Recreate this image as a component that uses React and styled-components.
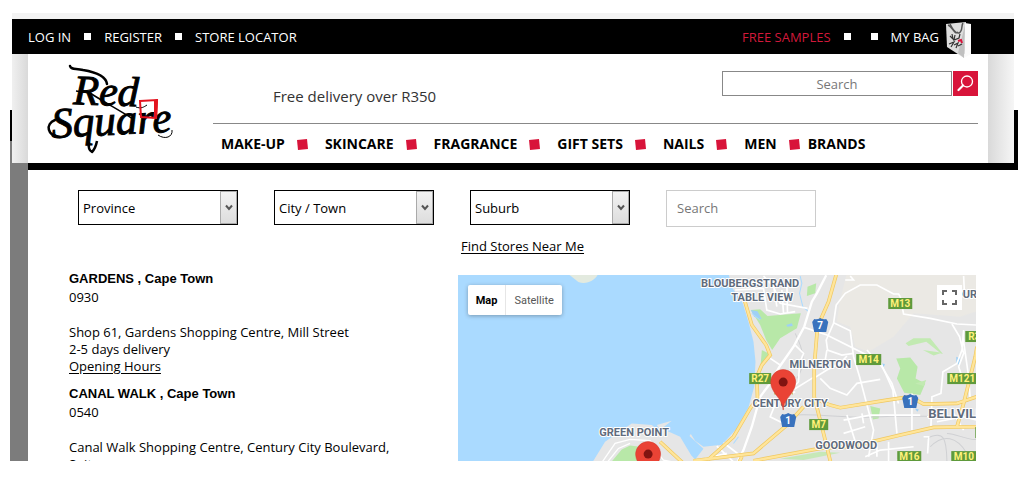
import styled, { createGlobalStyle, css } from 'styled-components';

const navItems = ['MAKE-UP', 'SKINCARE', 'FRAGRANCE', 'GIFT SETS', 'NAILS', 'MEN', 'BRANDS'];

const filters = [
  { id: 'province', label: 'Province' },
  { id: 'city', label: 'City / Town' },
  { id: 'suburb', label: 'Suburb' }
];

const stores = [
  {
    code: '0930',
    name: 'GARDENS , Cape Town',
    address: ['Shop 61, Gardens Shopping Centre, Mill Street'],
    delivery: '2-5 days delivery',
    hours: '#hours'
  },
  {
    code: '0540',
    name: 'CANAL WALK , Cape Town',
    address: ['Canal Walk Shopping Centre, Century City Boulevard,', 'Suite']
  }
];

const roadSigns = [
  { text: 'M13', x: 430, y: 23, w: 24 },
  { text: 'M14', x: 398, y: 79, w: 25 },
  { text: 'R27', x: 291, y: 98, w: 22 },
  { text: 'R3', x: 507, y: 56, w: 18 },
  { text: 'M121', x: 489, y: 98, w: 30 },
  { text: 'M7', x: 351, y: 144, w: 19 },
  { text: 'M16', x: 439, y: 176, w: 24 },
  { text: 'M10', x: 493, y: 176, w: 25 }
];

const shields = [
  { text: '7', x: 362, y: 50 },
  { text: '1', x: 330, y: 145 },
  { text: '1', x: 452, y: 126 }
];

const places = [
  { text: 'BLOUBERGSTRAND', x: 292, y: 12 },
  { text: 'TABLE VIEW', x: 304, y: 26 },
  { text: 'MILNERTON', x: 362, y: 93 },
  { text: 'CENTURY CITY', x: 332, y: 132 },
  { text: 'GOODWOOD', x: 388, y: 174 },
  { text: 'GREEN POINT', x: 176, y: 161 }
];

const Logo = () => (
  <LogoArt viewBox="0 0 140 100" role="img" aria-label="Red Square">
    <text x="33" y="46" fontSize="42" transform="rotate(2 33 46)">Red</text>
    <text x="12" y="80" fontSize="43" transform="rotate(-3 12 80)">Square</text>
    <path d="M30 8C31 12 36 10 43 12C55 14 66 18 67 26" fill="none" stroke="#000" strokeWidth="2.5" strokeLinecap="round" />
    <path d="M36 33L50 35C64 44 77 51 93 61" fill="none" stroke="#000" strokeWidth="1.5" />
    <path d="M15 62C5 66 7 78 20 79" fill="none" stroke="#000" strokeWidth="2.5" strokeLinecap="round" />
    <path d="M49 84C48 90 50 93 52 94C54 92 56 88 57 83" fill="none" stroke="#000" strokeWidth="2.5" strokeLinejoin="round" />
    <path d="M96 49C101 51 104 49 107 47" fill="none" stroke="#000" strokeWidth="1" />
    <path d="M100 43L117 42L116 60L101 59Z" fill="none" stroke="#e3131f" strokeWidth="2" />
    <path d="M114 42L118 41L117 61L114 59Z" fill="#e3131f" />
    <path d="M118 77C125 82 133 79 132 72" fill="none" stroke="#000" strokeWidth="1" />
  </LogoArt>
);

const BagIcon = () => (
  <BagArt viewBox="0 0 28 38" aria-hidden="true">
    <path d="M1 3L21 1L19 37L2 26Z" fill="#dedede" />
    <path d="M20 2L26 3L26 33L19 37Z" fill="#fafafa" />
    <path d="M20 4L19 37L13 32Z" fill="#c0c0c0" />
    <path d="M5 3C7 7 10 13 14 12C18 10 16 5 18 2M3 4C8 6 9 14 13 11" fill="none" stroke="#555" strokeWidth="1.5" />
    <path d="M5 15L8 18L7 13M10 14L9 19L14 17L15 13M4 23L9 21L6 26M9 24L13 22L11 27M13 25L17 23" fill="none" stroke="#333" strokeWidth="1.2" />
    <path d="M13 20L16 19L17 22" fill="none" stroke="#d8143a" strokeWidth="2" />
  </BagArt>
);

const Pin = ({ x, y }) => (
  <g transform={`translate(${x} ${y})`}>
    <path d="M0 40C-1 27-12 24-12.5 12A12.5 12.5 0 0 1 12.5 12C12 24 1 27 0 40Z" fill="#ea4335" stroke="#d33a2d" strokeWidth=".5" />
    <circle cy="12" r="4.5" fill="#811411" />
  </g>
);

const StoreMap = () => (
  <MapArt viewBox="0 0 518 186" preserveAspectRatio="xMaxYMin slice" role="img" aria-label="Store map">
    <rect width="518" height="186" fill="#aadaff" />
    <g transform="translate(222 -105) scale(.33333)">
      <path d="M145 310L155 352L188 400L206 460L220 515L226 575L222 650L205 712L170 775L125 824L70 830L45 812L32 792L28 798L70 836L45 868L15 836L0 850L30 890L900 890L900 310Z" fill="#e6e6e6" />
      <path d="M500 310L900 310L900 420L840 440L700 430L640 500L565 545L525 530L510 470L470 455L480 390Z" fill="#ebe9e4" />
      <path d="M-333 314L-247 314C-255 330-280 345-305 336Z" fill="#e3eadf" />
      <path d="M-265 880L-225 815L-190 790L-145 760L-85 765L-50 795L-70 765L-25 752L-55 775L0 800L30 850L45 890L-265 890Z" fill="#e6e6e6" />
      <path d="M-210 880L-175 838L-150 826L-120 830L-110 880Z" fill="#b8e8a8" />
      <path d="M212 420L240 418L262 438L362 430L350 475L300 505L276 540L258 510L240 465Z" fill="#b8e8a8" />
      <path d="M245 540L268 552L240 600ZM382 350L408 340L405 370L380 378ZM648 565L690 562L712 590L706 625L735 640L720 675L672 668L650 625L660 595ZM570 708L600 715L595 745L578 748Z" fill="#b8e8a8" />
      <path d="M676 520L700 505L750 505L788 552L782 550L738 515L685 528Z" fill="#c2eab2" />
      <path d="M728 540L785 548L760 556ZM705 640L738 630L730 648Z" fill="#c2eab2" />
      <path d="M300 866L420 845L480 848L370 870Z" fill="#c6e8b8" />
      <path d="M212 420L232 424L245 448L222 440ZM318 465L335 460L338 468L322 470ZM605 580L614 582L610 592ZM828 560L840 565L838 585L828 580ZM704 715L716 718L711 725Z" fill="#9fd0f5" />
      <path d="M360 318L365 340L358 370L368 410L385 425M215 430L240 450M160 820L175 800" fill="none" stroke="#aadaff" strokeWidth="3" />
      <path d="M345 735C430 730 520 750 640 738L890 740M740 805C790 780 800 800 800 885M800 790C830 790 855 810 888 808M345 490C370 540 380 580 350 625M750 830C790 790 830 800 860 850" fill="none" stroke="#cfd0d3" strokeWidth="3" />
      <g fill="none" stroke="#fff" strokeWidth="5">
        <path d="M438 316L410 370L395 395L372 470L340 530L298 590L270 640L240 680L215 770L190 840L170 880" strokeWidth="7" />
        <path d="M165 360L250 355L260 420L300 432L345 425M250 318L280 350L300 400L382 415M280 345L290 410M305 360L310 430M320 340L322 430" />
        <path d="M660 380L655 372L640 372L590 345L540 345L495 370L468 405L460 460L438 510L442 540L485 555L520 550" />
        <path d="M460 458L510 482L520 560L538 620L580 780L565 860M372 472L440 495L600 575L638 660L650 790M345 525L370 550L358 580L355 635L310 685" />
        <path d="M400 625L440 600L480 580L500 558M420 625L450 655L500 675L530 640L600 628M345 665L290 690L270 740L330 770M330 665L400 622" />
        <path d="M660 380L670 432L750 445L830 462L890 465M815 462L838 500L850 550L835 590L845 620M850 480L845 540L830 580L788 605L782 670L755 680L752 770M850 318L852 360L884 380M848 500L865 620L870 690" />
        <path d="M560 540L605 590L635 640L655 700M270 565L300 585M490 750L570 735L720 735M490 790L555 770M500 735L530 830M545 730L550 760M695 670L695 780M740 740L800 740M730 800L745 800L742 850M690 860L650 870M555 860L600 840L700 830M625 815L625 880M590 830L590 860" />
        <path d="M130 818L185 860M110 828L165 880M20 890L75 865L140 850M770 755L850 740L890 750M820 730L850 780" />
        <path d="M510 318L520 330L495 330M440 540L430 600" />
      </g>
      <g fill="none" stroke="#f0c860" strokeWidth="11">
        <path d="M468 314L445 395L412 470L402 590L402 680L430 790L452 880" />
        <path d="M190 380L215 465L258 525L270 555L245 585L230 620L232 685L210 715L160 800L85 868" />
        <path d="M40 872L220 850L320 765L370 710M220 872L420 835L520 828L660 795L760 772L890 770M415 690L450 705L480 713L620 690L690 680L730 702L830 700L890 680M830 770L850 700L885 560L890 530" />
        <path d="M-60 815L10 880M175 880L185 860" />
      </g>
      <g fill="none" stroke="#ffe59a" strokeWidth="7">
        <path d="M468 314L445 395L412 470L402 590L402 680L430 790L452 880" />
        <path d="M190 380L215 465L258 525L270 555L245 585L230 620L232 685L210 715L160 800L85 868" />
        <path d="M40 872L220 850L320 765L370 710M220 872L420 835L520 828L660 795L760 772L890 770M415 690L450 705L480 713L620 690L690 680L730 702L830 700L890 680M830 770L850 700L885 560L890 530" />
        <path d="M-60 815L10 880M175 880L185 860" />
      </g>
      <g fill="none" stroke="#fff" strokeWidth="4">
        <path d="M-240 885L-195 820L-150 808L-90 812L-70 850M-225 885L-185 835L-150 820M-90 820L-50 870L0 880" />
      </g>
      <path d="M282 670L338 670" stroke="#c6b95d" strokeWidth="6" strokeDasharray="8 5" />
    </g>
    {places.map((place) => (
      <PlaceName key={place.text} x={place.x} y={place.y}>{place.text}</PlaceName>
    ))}
    <PlaceName x="508" y="23">DUR</PlaceName>
    <PlaceName x="501" y="143" $large>BELLVILLE</PlaceName>
    {roadSigns.map((sign) => (
      <g key={sign.text}>
        <rect x={sign.x} y={sign.y} width={sign.w} height="11" fill="#5f9a3b" />
        <SignText x={sign.x + sign.w / 2} y={sign.y + 9}>{sign.text}</SignText>
      </g>
    ))}
    <rect x="517" y="152" width="4" height="11" fill="#5f9a3b" />
    {shields.map((shield) => (
      <g key={`${shield.x}-${shield.y}`}>
        <path d="M-6-6Q-3-5 0-7Q3-5 6-6L8-3L6 7L-6 7L-8-3Z" transform={`translate(${shield.x} ${shield.y})`} fill="#3972bd" />
        <ShieldText x={shield.x} y={shield.y + 4}>{shield.text}</ShieldText>
      </g>
    ))}
    <Pin x={325} y={95} />
    <Pin x={190} y={167} />
  </MapArt>
);

const StoreEntry = ({ store }) => (
  <Store>
    <StoreName>{store.name}</StoreName>
    <StoreLine>{store.code}</StoreLine>
    <StoreAddress>
      {store.address.map((line) => <StoreLine key={line}>{line}</StoreLine>)}
    </StoreAddress>
    {store.delivery && <StoreLine>{store.delivery}</StoreLine>}
    {store.hours && <StoreLine><TextLink href={store.hours}>Opening Hours</TextLink></StoreLine>}
  </Store>
);

const App = () => {
  return (
    <>
      <GlobalStyle />
      <Page>
        <Header>
          <TopBar>
            <TopLink href="#login">LOG IN</TopLink>
            <WhiteSquare />
            <TopLink href="#register">REGISTER</TopLink>
            <WhiteSquare />
            <TopLink href="#stores">STORE LOCATOR</TopLink>
            <Spacer />
            <TopLink href="#samples" $red>FREE SAMPLES</TopLink>
            <WhiteSquare />
            <WhiteSquare />
            <BagLink href="#bag">MY BAG<BagIcon /></BagLink>
          </TopBar>
          <HeaderBody>
            <HomeLink href="#home"><Logo /></HomeLink>
            <HeaderMain>
              <HeaderTop>
                <Promo>Free delivery over R350</Promo>
                <SearchForm onSubmit={(e) => e.preventDefault()}>
                  <SiteSearch type="text" placeholder="Search" aria-label="Search products" />
                  <SearchButton type="submit" aria-label="Search">
                    <svg width="17" height="17" viewBox="0 0 17 17" fill="none" stroke="#fff">
                      <circle cx="10" cy="6.5" r="5.5" strokeWidth="1.3" />
                      <path d="M6 10.5L1.5 15" strokeWidth="2.2" strokeLinecap="round" />
                    </svg>
                  </SearchButton>
                </SearchForm>
              </HeaderTop>
              <Nav>
                {navItems.map((item, i) => (
                  <NavItem key={item} $last={i === navItems.length - 1}>
                    {i > 0 && (
                      <NavSquare viewBox="0 0 11 11" aria-hidden="true">
                        <path d="M0 1L10 0L11 10L1 11Z" fill="#d8143a" />
                      </NavSquare>
                    )}
                    <NavLink href="#shop">{item}</NavLink>
                  </NavItem>
                ))}
              </Nav>
            </HeaderMain>
          </HeaderBody>
        </Header>
        <Content>
          <Filters>
            {filters.map((filter) => (
              <SelectBox key={filter.id}>
                <Select id={filter.id} aria-label={filter.label}>
                  <option>{filter.label}</option>
                </Select>
                <SelectArrow>
                  <svg width="8" height="7" viewBox="0 0 8 7">
                    <path d="M1 1.5L4 5L7 1.5" fill="none" stroke="#555" strokeWidth="2" />
                  </svg>
                </SelectArrow>
              </SelectBox>
            ))}
            <StoreSearch type="text" placeholder="Search" aria-label="Search stores" />
          </Filters>
          <NearMe><TextLink href="#near">Find Stores Near Me</TextLink></NearMe>
          <Results>
            <StoreList>
              {stores.map((store) => <StoreEntry key={store.code} store={store} />)}
            </StoreList>
            <MapPanel>
              <StoreMap />
              <MapTypes>
                <MapType type="button" $active>Map</MapType>
                <MapType type="button">Satellite</MapType>
              </MapTypes>
              <FullscreenButton type="button" aria-label="Toggle fullscreen">
                <svg width="15" height="15" viewBox="0 0 15 15" fill="none" stroke="#666" strokeWidth="2">
                  <path d="M1 5V1H5M10 1H14V5M14 10V14H10M5 14H1V10" />
                </svg>
              </FullscreenButton>
            </MapPanel>
          </Results>
        </Content>
      </Page>
    </>
  );
};

const GlobalStyle = createGlobalStyle`
  * {
    box-sizing: border-box;
  }

  body {
    margin: 0;
    background: #fff;
    color: #000;
    font-family: "Open Sans", sans-serif;
    font-size: 13px;
  }

  input, select, button {
    font-family: inherit;
    font-size: 13px;
  }
`;

const Page = styled.div`
  margin: 13px 0 0 10px;
  background:
    linear-gradient(#fff 0 97px, #000 97px 128px, #7c7c7c 128px) left top / 18px 100% no-repeat,
    linear-gradient(#fff 0 97px, #000 97px 157px, #fff 157px) right top / 4px 100% no-repeat;
`;

const Header = styled.header`
  margin: 0 4px 0 2px;
  border-top: 6px solid #f3f3f3;
`;

const TopBar = styled.div`
  display: flex;
  align-items: center;
  gap: 13px;
  height: 35px;
  padding: 0 41px 0 16px;
  background: #000;
`;

const TopLink = styled.a`
  color: ${({ $red }) => ($red ? '#d2193a' : '#fff')};
  line-height: 18px;
  text-decoration: none;
`;

const WhiteSquare = styled.span`
  width: 7px;
  height: 7px;
  background: #fff;

  & + & {
    margin-left: 7px;
  }
`;

const Spacer = styled.span`
  flex: 1;
`;

const BagLink = styled(TopLink)`
  display: flex;
  align-items: center;
  gap: 6px;
`;

const BagArt = styled.svg`
  width: 28px;
  height: 38px;
  margin: -8px 0 -14px;
`;

const HeaderBody = styled.div`
  display: flex;
  height: 109px;
  padding: 0 36px 0 36px;
  background: linear-gradient(to right, #f0f0f0 0, #d9d9d9 16px, #fff 16px, #fff calc(100% - 26px), #d9d9d9 calc(100% - 26px), #f6f6f6 100%);
`;

const HomeLink = styled.a`
  flex: none;
  width: 165px;
`;

const LogoArt = styled.svg`
  display: block;
  width: 140px;
  height: 100px;
  margin: 4px 0 0 -8px;
  font-family: "Liberation Serif", serif;
  font-style: italic;

  text {
    stroke: #000;
    stroke-width: 1px;
  }
`;

const HeaderMain = styled.div`
  flex: 1;
`;

const HeaderTop = styled.div`
  display: flex;
  justify-content: space-between;
  align-items: flex-start;
  height: 70px;
  padding: 17px 0 0 60px;
  border-bottom: 1px solid #888;
`;

const Promo = styled.p`
  margin: 0;
  padding-top: 15px;
  color: #333;
  font-size: 15px;
  line-height: 20px;
`;

const SearchForm = styled.form`
  display: flex;
  gap: 1px;
`;

const SiteSearch = styled.input`
  width: 230px;
  height: 25px;
  padding: 0;
  border: 1px solid #888;
  text-align: center;

  &::placeholder {
    color: #777;
  }
`;

const SearchButton = styled.button`
  display: grid;
  place-items: center;
  width: 25px;
  height: 25px;
  padding: 0;
  border: 0;
  background: #d8143a;
`;

const Nav = styled.nav`
  display: flex;
  padding: 10px 0 0 8px;
`;

const NavItem = styled.div`
  display: flex;
  align-items: center;
  gap: ${({ $last }) => ($last ? '8px' : '17px')};
  margin-right: 12px;
`;

const NavSquare = styled.svg`
  width: 11px;
  height: 11px;
`;

const NavLink = styled.a`
  color: #000;
  font-size: 14px;
  font-weight: 700;
  line-height: 20px;
  text-decoration: none;
`;

const Content = styled.main`
  margin-left: 18px;
  padding: 20px 42px 0 41px;
  border-top: 7px solid #000;
`;

const Filters = styled.div`
  display: flex;
  align-items: flex-start;
  gap: 36px;
  padding-left: 9px;
`;

const SelectBox = styled.div`
  display: grid;
  width: 160px;
  height: 35px;
  border: 1px solid #000;
`;

const Select = styled.select`
  grid-area: 1 / 1;
  appearance: none;
  padding: 0 22px 0 4px;
  border: 0;
  border-radius: 0;
  background: #fff;
  color: #000;
`;

const SelectArrow = styled.span`
  display: grid;
  grid-area: 1 / 1;
  justify-self: end;
  place-items: center;
  width: 17px;
  border: 1px solid #aaa;
  background: linear-gradient(#f2f2f2, #ddd);
  pointer-events: none;
`;

const StoreSearch = styled.input`
  width: 150px;
  height: 37px;
  padding: 0 10px 2px;
  border: 1px solid #ccc;

  &::placeholder {
    color: #777;
  }
`;

const NearMe = styled.p`
  margin: 0;
  padding-top: 10px;
  text-align: center;
  line-height: 18px;
`;

const TextLink = styled.a`
  color: #000;
  text-underline-offset: 2px;
`;

const Results = styled.div`
  display: grid;
  grid-template-columns: 3fr 4fr;
  align-items: end;
  padding-top: 14px;
`;

const StoreList = styled.section`
  height: 192px;
  overflow: hidden;
`;

const Store = styled.article`
  margin-bottom: 9px;
`;

const StoreName = styled.h2`
  margin: 0;
  font-family: "Liberation Sans", sans-serif;
  font-size: 13px;
  line-height: 20px;
`;

const StoreAddress = styled.div`
  padding-top: 18px;
`;

const StoreLine = styled.p`
  margin: 0;
  line-height: 17px;
`;

const MapPanel = styled.section`
  position: relative;
  height: 186px;
  overflow: hidden;
`;

const MapArt = styled.svg`
  display: block;
  width: 100%;
  height: 186px;
  font-family: Roboto, sans-serif;
`;

const PlaceName = styled.text`
  fill: #5f6b7c;
  stroke: #fff;
  stroke-width: 2px;
  paint-order: stroke;
  stroke-linejoin: round;
  font-size: 11px;
  font-weight: 700;
  text-anchor: middle;

  ${({ $large }) => $large && css`
    font-size: 13px;
  `}
`;

const SignText = styled.text`
  fill: #fff17a;
  font-size: 10px;
  font-weight: 700;
  text-anchor: middle;
`;

const ShieldText = styled.text`
  fill: #fff;
  font-size: 10px;
  font-weight: 700;
  text-anchor: middle;
`;

const MapTypes = styled.div`
  position: absolute;
  top: 10px;
  left: 10px;
  display: flex;
  border-radius: 2px;
  background: #fff;
  box-shadow: 0 1px 4px rgba(0, 0, 0, 0.3);
`;

const MapType = styled.button`
  height: 30px;
  padding: 0 8px;
  border: 0;
  background: none;
  color: ${({ $active }) => ($active ? '#000' : '#565656')};
  font-family: Roboto, sans-serif;
  font-size: 11px;
  font-weight: ${({ $active }) => ($active ? 700 : 400)};

  & + & {
    border-left: 1px solid #e6e6e6;
  }
`;

const FullscreenButton = styled.button`
  position: absolute;
  top: 10px;
  right: 14px;
  display: grid;
  place-items: center;
  width: 25px;
  height: 25px;
  padding: 0;
  border: 0;
  background: #fff;
`;

export default App;
